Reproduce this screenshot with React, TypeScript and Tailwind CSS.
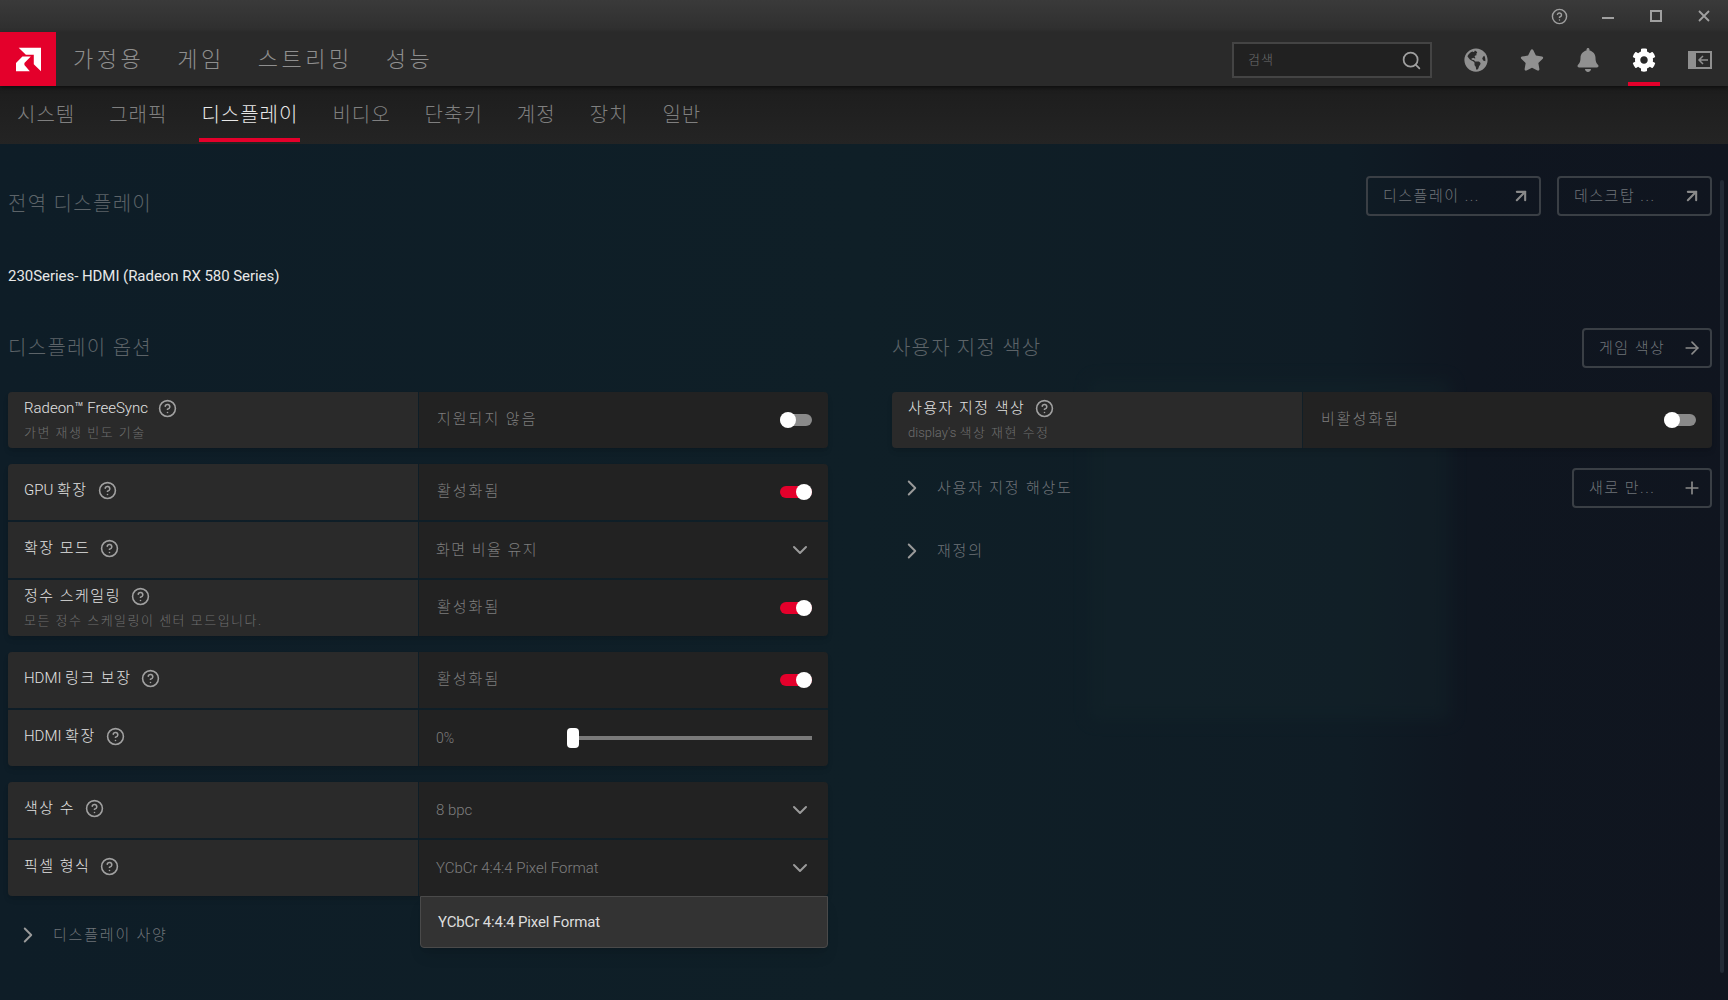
import React from 'react';
import { ArrowRight, ArrowUpRight, ChevronDown, ChevronRight, CircleHelp, Plus, Search } from 'lucide-react';
import { FaBell, FaCog, FaGlobeAmericas, FaStar } from 'react-icons/fa';

// Korean runs are spaced wider than the Latin ones in the original
const K = ({ children }: { children: React.ReactNode }) => <span className="tracking-[1.5px]">{children}</span>;

const Help = () => <CircleHelp size={19} strokeWidth={2} className="text-[#a0a0a0] shrink-0" />;

const Toggle = ({ on }: { on?: boolean }) => (
  <div className={`relative w-8 h-3 rounded-full ${on ? 'bg-[#e4002b]' : 'bg-[#8a8a8a]'}`}>
    <div className={`absolute -top-0.5 w-4 h-4 rounded-full bg-white ${on ? 'right-0' : 'left-0'}`}></div>
  </div>
);

const Row = ({ label, sub, children }: { label: React.ReactNode; sub?: React.ReactNode; children: React.ReactNode }) => (
  <div className="flex h-14">
    <div className={`w-[410px] bg-[#2a2a2a] pl-4 flex flex-col ${sub ? 'pt-1' : 'pt-[14px]'}`}>
      <div className="flex items-center gap-2.5 text-[15px] leading-6 text-[#e2e2e2]">
        <span>{label}</span>
        <Help />
      </div>
      {sub && <div className="text-[13px] leading-5 mt-[3px] text-[#6f6f6f]">{sub}</div>}
    </div>
    <div className="flex-1 ml-px bg-[#222222] pl-[17px] pr-4 flex items-center justify-between text-[15px] text-[#7e7e7e]">
      {children}
    </div>
  </div>
);

const Select = ({ value }: { value: React.ReactNode }) => (
  <>
    <span>{value}</span>
    <ChevronDown size={24} strokeWidth={2} className="text-[#9a9a9a]" />
  </>
);

const ToggleValue = ({ value, on }: { value: string; on?: boolean }) => (
  <>
    <span className="-mt-0.5 ml-px tracking-[2px]">{value}</span>
    <Toggle on={on} />
  </>
);

const Group = ({ children }: { children: React.ReactNode }) => (
  <div className="flex flex-col gap-0.5 rounded overflow-hidden shadow-md">{children}</div>
);

const OutlineButton = ({ label, icon, w }: { label: string; icon: React.ReactNode; w: string }) => (
  <div className={`${w} h-10 border-2 border-[#3a3f45] rounded flex items-center justify-between pl-[15px] pr-2 text-[15px] tracking-[1.5px] text-[#6f7479]`}>
    <span>{label}</span>
    {icon}
  </div>
);

const Collapse = ({ label }: { label: string }) => (
  <div className="flex items-center gap-3 text-[15px] tracking-[1.8px] text-[#6f7479]">
    <ChevronRight size={26} strokeWidth={1.8} className="text-[#9a9a9a]" />
    {label}
  </div>
);

const AmdLogo = () => (
  <svg viewBox="0 0 25.300 24" className="w-[25px] h-[25px]" fill="#fff">
    <path d="M2.700 0H25.300V24L18 16.700V7.300H10z" />
    <path d="M0 15.500L6.500 9H15L8.500 15.500V17.500L14 24H0z" />
  </svg>
);

export default function App() {
  return (
    <div className="relative w-[1728px] h-[1000px] overflow-hidden bg-[linear-gradient(90deg,#0e1d27_0%,#0f1f27_50%,#0f1c25_78%,#0f1620_85%,#10151f_100%)] font-['Roboto','Noto_Sans_CJK_KR',sans-serif] font-light">
      {/* Faint wallpaper behind the settings */}
      <div className="absolute left-[1090px] top-[380px] w-[360px] h-[340px] bg-[#14252b] opacity-40 blur-sm"></div>

      {/* Title bar */}
      <div className="relative h-8 bg-[linear-gradient(180deg,#3a3a3a,#2e2e2e)] flex items-center justify-end text-[#a0a0a0]">
        <CircleHelp size={17} strokeWidth={2} />
        <div className="ml-[34px] w-3 h-0.5 bg-[#a0a0a0] mt-1"></div>
        <div className="ml-9 w-3 h-3 border-2 border-[#a0a0a0]"></div>
        <svg viewBox="0 0 12 12" className="ml-9 mr-[18px] w-3 h-3" stroke="#a0a0a0" strokeWidth="1.8">
          <path d="M1 1l10 10M11 1L1 11" />
        </svg>
      </div>

      {/* Main nav */}
      <div className="relative z-10 h-[54px] bg-[#2a2a2a] flex items-center shadow-[0_2px_4px_rgba(0,0,0,0.5)]">
        <div className="w-14 h-[54px] bg-[#e4002b] flex items-center justify-center shrink-0">
          <AmdLogo />
        </div>
        <div className="ml-[17px] flex gap-[33px] text-[22px] tracking-[3.5px] text-[#8f8f8f]">
          <span>가정용</span>
          <span>게임</span>
          <span>스트리밍</span>
          <span>성능</span>
        </div>
        <div className="ml-auto pt-0.5 flex items-center h-full text-[#909090]">
          <div className="w-[200px] h-9 border-2 border-[#444444] bg-[#212121] flex items-center justify-between pl-3.5 pr-2 text-[13px] tracking-[1px] text-[#6f6f6f]">
            <span>검색</span>
            <Search size={21} strokeWidth={2} className="text-[#a0a0a0]" />
          </div>
          <FaGlobeAmericas size={24} className="ml-8" />
          <FaStar size={24} className="ml-8" />
          <FaBell size={24} className="ml-8" />
          <div className="relative ml-8 h-full flex items-center">
            <FaCog size={24} className="text-white" />
            <div className="absolute bottom-0 -left-1 w-8 h-1 bg-[#e4002b]"></div>
          </div>
          <svg viewBox="0 0 24 18" className="ml-8 mr-4 w-6 h-[18px]">
            <path d="M0 0h24v18H0z" fill="#909090" />
            <path d="M8 2h14v14H8z" fill="#2a2a2a" />
            <path d="M20 9H11M15 5l-4 4 4 4" stroke="#909090" strokeWidth="1.500" fill="none" />
          </svg>
        </div>
      </div>

      {/* Sub nav */}
      <div className="relative h-[58px] bg-[linear-gradient(180deg,#1d1d1d,#242424)] flex gap-[34px] pl-[17px] text-[20px] tracking-[1px] text-[#7f7f7f]">
        <span className="pt-[14px]">시스템</span>
        <span className="pt-[14px]">그래픽</span>
        <span className="relative pt-[14px] text-[#e8e8e8]">
          디스플레이
          <div className="absolute bottom-0.5 -left-0.5 -right-0.5 h-1 bg-[#e4002b]"></div>
        </span>
        <span className="pt-[14px]">비디오</span>
        <span className="pt-[14px]">단축키</span>
        <span className="pt-[14px]">계정</span>
        <span className="pt-[14px]">장치</span>
        <span className="pt-[14px]">일반</span>
      </div>

      {/* Content */}
      <div className="relative pl-2 pr-4 pt-8">
        <div className="flex items-center justify-between h-10">
          <div className="pt-4 text-[20px] tracking-[1.3px] text-[#5c6368]">전역 디스플레이</div>
          <div className="flex gap-4">
            <OutlineButton w="w-[175px]" label="디스플레이 ..." icon={<ArrowUpRight size={20} strokeWidth={2.500} className="text-[#8a8a8a]" />} />
            <OutlineButton w="w-[155px]" label="데스크탑 ..." icon={<ArrowUpRight size={20} strokeWidth={2.500} className="text-[#8a8a8a]" />} />
          </div>
        </div>
        <div className="mt-[48px] text-[15px] leading-6 font-normal tracking-[-0.05px] text-[#e8e8e8]">230Series- HDMI (Radeon RX 580 Series)</div>

        <div className="mt-[40px] grid grid-cols-[820px_820px] gap-x-16">
          {/* Left column */}
          <div>
            <div className="h-10 flex items-center text-[20px] tracking-[1.3px] text-[#5c6368]">디스플레이 옵션</div>
            <div className="mt-6 flex flex-col gap-4">
              <Group>
                <Row label="Radeon™ FreeSync" sub={<K>가변 재생 빈도 기술</K>}>
                  <ToggleValue value="지원되지 않음" />
                </Row>
              </Group>
              <Group>
                <Row label={<>GPU <K>확장</K></>}>
                  <ToggleValue value="활성화됨" on />
                </Row>
                <Row label={<K>확장 모드</K>}>
                  <Select value={<K>화면 비율 유지</K>} />
                </Row>
                <Row label={<K>정수 스케일링</K>} sub={<K>모든 정수 스케일링이 센터 모드입니다.</K>}>
                  <ToggleValue value="활성화됨" on />
                </Row>
              </Group>
              <Group>
                <Row label={<>HDMI <K>링크 보장</K></>}>
                  <ToggleValue value="활성화됨" on />
                </Row>
                <Row label={<>HDMI <K>확장</K></>}>
                  <span className="text-[14px] w-[131px]">0%</span>
                  <div className="relative flex-1 h-1 bg-[#7a7a7a]">
                    <div className="absolute -top-2 left-0 w-3 h-5 rounded-sm bg-white"></div>
                  </div>
                </Row>
              </Group>
              <Group>
                <Row label={<K>색상 수</K>}>
                  <Select value="8 bpc" />
                </Row>
                <Row label={<K>픽셀 형식</K>}>
                  <Select value="YCbCr 4:4:4 Pixel Format" />
                </Row>
              </Group>
            </div>
            <div className="mt-[26px] pl-[7px]">
              <Collapse label="디스플레이 사양" />
            </div>
          </div>

          {/* Right column */}
          <div>
            <div className="h-10 flex items-center justify-between text-[20px] text-[#5c6368]">
              <span className="tracking-[1.2px]">사용자 지정 색상</span>
              <OutlineButton w="w-[130px]" label="게임 색상" icon={<ArrowRight size={20} strokeWidth={2} className="text-[#8a8a8a]" />} />
            </div>
            <div className="mt-6">
              <Group>
                <Row label={<K>사용자 지정 색상</K>} sub={<>display's <K>색상 재현 수정</K></>}>
                  <ToggleValue value="비활성화됨" />
                </Row>
              </Group>
            </div>
            <div className="mt-5 h-10 flex items-center justify-between pl-[7px]">
              <Collapse label="사용자 지정 해상도" />
              <OutlineButton w="w-[140px]" label="새로 만..." icon={<Plus size={20} strokeWidth={2} className="text-[#8a8a8a]" />} />
            </div>
            <div className="mt-[30px] pl-[7px]">
              <Collapse label="재정의" />
            </div>
          </div>
        </div>
      </div>

      {/* Open dropdown */}
      <div className="absolute left-[420px] top-[896px] w-[408px] h-[52px] bg-[#333333] border border-[#4a4a4a] rounded-b-sm shadow-lg flex items-center pl-[17px] text-[15px] font-normal tracking-[-0.15px] text-[#dddddd]">
        YCbCr 4:4:4 Pixel Format
      </div>

      {/* Scrollbar */}
      <div className="absolute left-[1720px] top-[180px] w-1 h-[793px] rounded-full bg-[#222a35]"></div>
    </div>
  );
}
